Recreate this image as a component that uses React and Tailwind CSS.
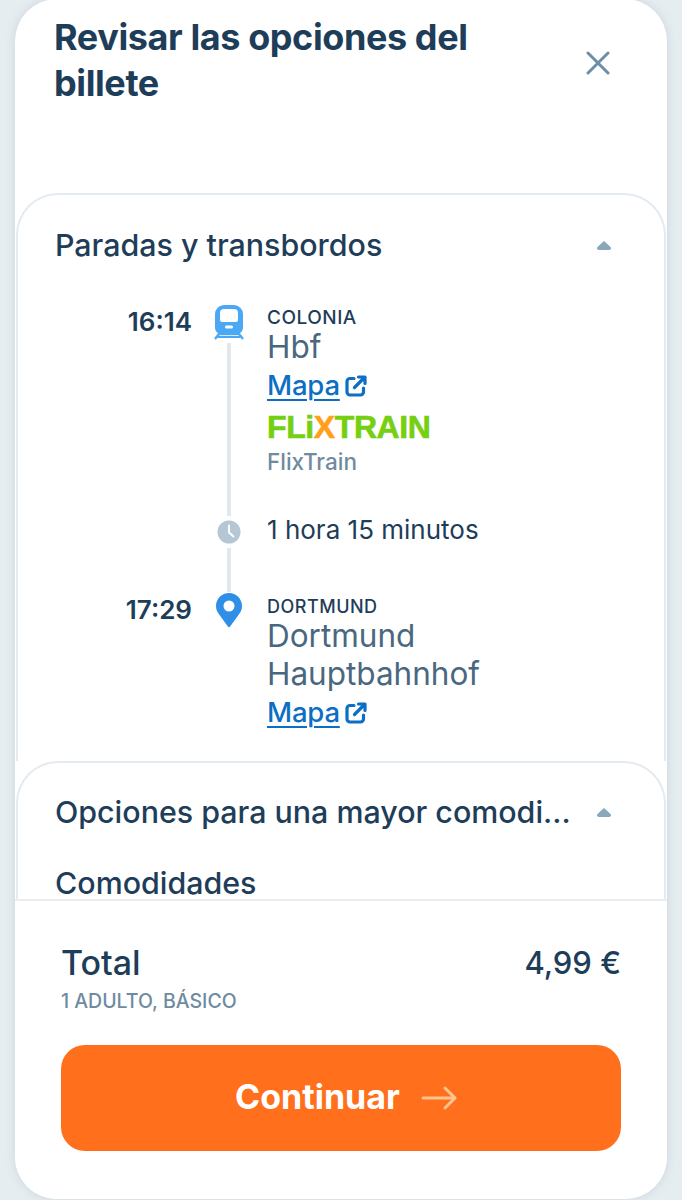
const MapaLink = () => (
  <div className="flex items-center gap-[5px] h-[39px]">
    <span className="text-[27.5px] leading-[39px] font-medium tracking-[-0.2px] text-[#0c6fc4] underline underline-offset-[4px] decoration-2">Mapa</span>
    <svg width="22" height="22" viewBox="0 0 22 22" fill="none" stroke="#0c6fc4" strokeWidth="3.2" strokeLinecap="round" strokeLinejoin="round">
      <path d="M9 3.5H5a3 3 0 0 0-3 3v10.500a3 3 0 0 0 3 3h10.500a3 3 0 0 0 3-3v-4" />
      <path d="M13.500 2H20v6.500M19.500 2.500L9.500 12.500" />
    </svg>
  </div>
);

const TrainIcon = () => (
  <svg width="30" height="36" viewBox="0 0 30 36">
    <path fillRule="evenodd" fill="#4aa8f5" d="M10 1h10a9 9 0 0 1 9 9v14a6 6 0 0 1-6 6H7a6 6 0 0 1-6-6V10a9 9 0 0 1 9-9zM10 5a4 4 0 0 0-4 4v7a2 2 0 0 0 2 2h14a2 2 0 0 0 2-2V9a4 4 0 0 0-4-4z" />
    <rect x="11" y="21.500" width="8" height="3" rx="1.500" fill="#ffffff" />
    <path d="M1 35l4-5h20l4 5" fill="none" stroke="#4aa8f5" strokeWidth="2.400" strokeLinejoin="round" />
    <path d="M3.500 33h23" stroke="#4aa8f5" strokeWidth="2" />
  </svg>
);

const ClockIcon = () => (
  <svg width="24" height="24" viewBox="0 0 24 24">
    <circle cx="12" cy="12" r="11.500" fill="#b5c6d4" />
    <path d="M12 5.500V12.500l4.500 4" fill="none" stroke="#ffffff" strokeWidth="2" strokeLinecap="round" strokeLinejoin="round" />
  </svg>
);

const PinIcon = () => (
  <svg width="28" height="36" viewBox="0 0 28 36">
    <path fillRule="evenodd" fill="#2f8fe6" d="M14 1c7.300 0 13 5.700 13 13 0 3.200-1.100 5.800-3 8.200L15.300 34.300a1.600 1.600 0 0 1-2.600 0L4 22.200C2.100 19.800 1 17.200 1 14 1 6.700 6.700 1 14 1zM14 8.500a5.500 5.500 0 1 0 0 11 5.500 5.500 0 0 0 0-11z" />
  </svg>
);

const Caret = () => (
  <svg width="16" height="10" viewBox="0 0 16 10" className="shrink-0">
    <path d="M8 1.500L14.500 7.500Q15 9.500 13.500 9.500H2.500Q1 9.500 1.500 7.500Z" fill="#8ba7bb" stroke="#8ba7bb" strokeLinejoin="round" />
  </svg>
);

export default function App() {
  return (
    <div className="h-[1200px] overflow-hidden bg-[#e6edf1] px-[15px] font-['Inter','Liberation_Sans',sans-serif] text-[#1e3d59]">
      <div className="h-[1200px] flex flex-col bg-white rounded-[42px] -mt-[1px] shadow-[0_0_10px_rgba(120,145,165,0.25)] overflow-hidden">
        <div className="flex-1 min-h-0 overflow-hidden">
          {/* header */}
          <div className="flex justify-between pl-[39px] pr-[57px] pt-[15px] h-[194px]">
            <h1 className="w-[440px] text-[36px] leading-[46px] font-bold tracking-[-0.4px]">Revisar las opciones del billete</h1>
            <svg width="24" height="24" viewBox="0 0 24 24" className="mt-[37px]" fill="none" stroke="#6c8ea6" strokeWidth="3" strokeLinecap="round">
              <path d="M2 2l20 20M22 2L2 22" />
            </svg>
          </div>

          {/* stops */}
          <div className="mx-[1px] border-t-2 border-x-2 border-[#e4ebf0] rounded-t-[42px] h-[568px] bg-white">
            <div className="flex items-center justify-between pl-[37px] pr-[52px] pt-[30px]">
              <h2 className="text-[30.400px] leading-[40px] font-medium">Paradas y transbordos</h2>
              <Caret />
            </div>

            <div className="mt-[39px] flex">
              <div className="w-[173px] shrink-0 text-right text-[26px] leading-[36px] font-semibold"><span className="block -mr-[1px]">16:14</span></div>
              <div className="w-[76px] shrink-0 flex flex-col items-center">
                <TrainIcon />
                <div className="w-[4px] flex-1 bg-[#e1e9ee] mt-[3px]" />
              </div>
              <div className="pt-[3px] pb-[38px]">
                <div className="text-[19px] leading-[21px] font-medium tracking-[0.5px]">COLONIA</div>
                <div className="text-[31.500px] leading-[38px] text-[#4a6780]">Hbf</div>
                <MapaLink />
                <div className="mt-[2px] h-[39px] flex items-center font-['Liberation_Sans',sans-serif] text-[32px] font-bold text-[#76cf10] leading-none tracking-[-0.4px] [-webkit-text-stroke:0.6px]">
                  FLi<span className="text-[#ff9f1a]">X</span>TRAIN
                </div>
                <div className="text-[22.5px] leading-[32px] font-medium text-[#6f8ba0]">FlixTrain</div>
              </div>
            </div>

            <div className="flex items-center h-[32px]">
              <div className="w-[173px] shrink-0" />
              <div className="w-[76px] shrink-0 flex justify-center"><ClockIcon /></div>
              <div className="text-[26px] leading-[28px] mb-[4px]">1 hora 15 minutos</div>
            </div>

            <div className="flex">
              <div className="w-[173px] shrink-0" />
              <div className="w-[76px] shrink-0 flex justify-center"><div className="w-[4px] h-[44px] bg-[#e1e9ee]" /></div>
            </div>

            <div className="flex">
              <div className="w-[173px] shrink-0 text-right text-[26px] leading-[36px] font-semibold"><span className="block -mr-[1px]">17:29</span></div>
              <div className="w-[76px] shrink-0 flex justify-center"><PinIcon /></div>
              <div className="pt-[4px]">
                <div className="text-[18px] leading-[21px] font-medium tracking-[0.5px]">DORTMUND</div>
                <div className="text-[31.500px] leading-[38px] text-[#4a6780]">Dortmund<br />Hauptbahnhof</div>
                <MapaLink />
              </div>
            </div>
          </div>

          {/* options */}
          <div className="mx-[1px] border-t-2 border-x-2 border-[#e4ebf0] rounded-t-[42px] h-[200px] bg-white">
            <div className="flex items-center justify-between pl-[37px] pr-[52px] pt-[29px]">
              <h2 className="text-[30.400px] leading-[40px] font-medium whitespace-nowrap">Opciones para una mayor comodi...</h2>
              <Caret />
            </div>
            <div className="pl-[37px] pt-[36px] text-[30.400px] leading-[30px] font-medium">Comodidades</div>
          </div>
        </div>

        {/* footer */}
        <div className="border-t-2 border-[#e8eef2] shrink-0 h-[300px] px-[46px] bg-white">
          <div className="flex justify-between items-start pt-[42px]">
            <div className="text-[34px] leading-[40px] font-medium">Total</div>
            <div className="text-[31px] leading-[40px] font-medium">4,99 €</div>
          </div>
          <div className="text-[19.500px] leading-[24px] font-medium text-[#6f8ba0] mt-[6px]">1 ADULTO, BÁSICO</div>
          <button className="mt-[32px] w-full h-[106px] rounded-[24px] bg-[#ff6f1c] pl-[10px] flex items-center justify-center gap-[21px]">
            <span className="text-[34px] font-bold text-white -mt-[4px]">Continuar</span>
            <svg width="36" height="24" viewBox="0 0 36 24" fill="none" stroke="#ffc38f" strokeWidth="3" strokeLinecap="round" strokeLinejoin="round">
              <path d="M2 12h32M24 2l10 10-10 10" />
            </svg>
          </button>
        </div>
      </div>
    </div>
  );
}
